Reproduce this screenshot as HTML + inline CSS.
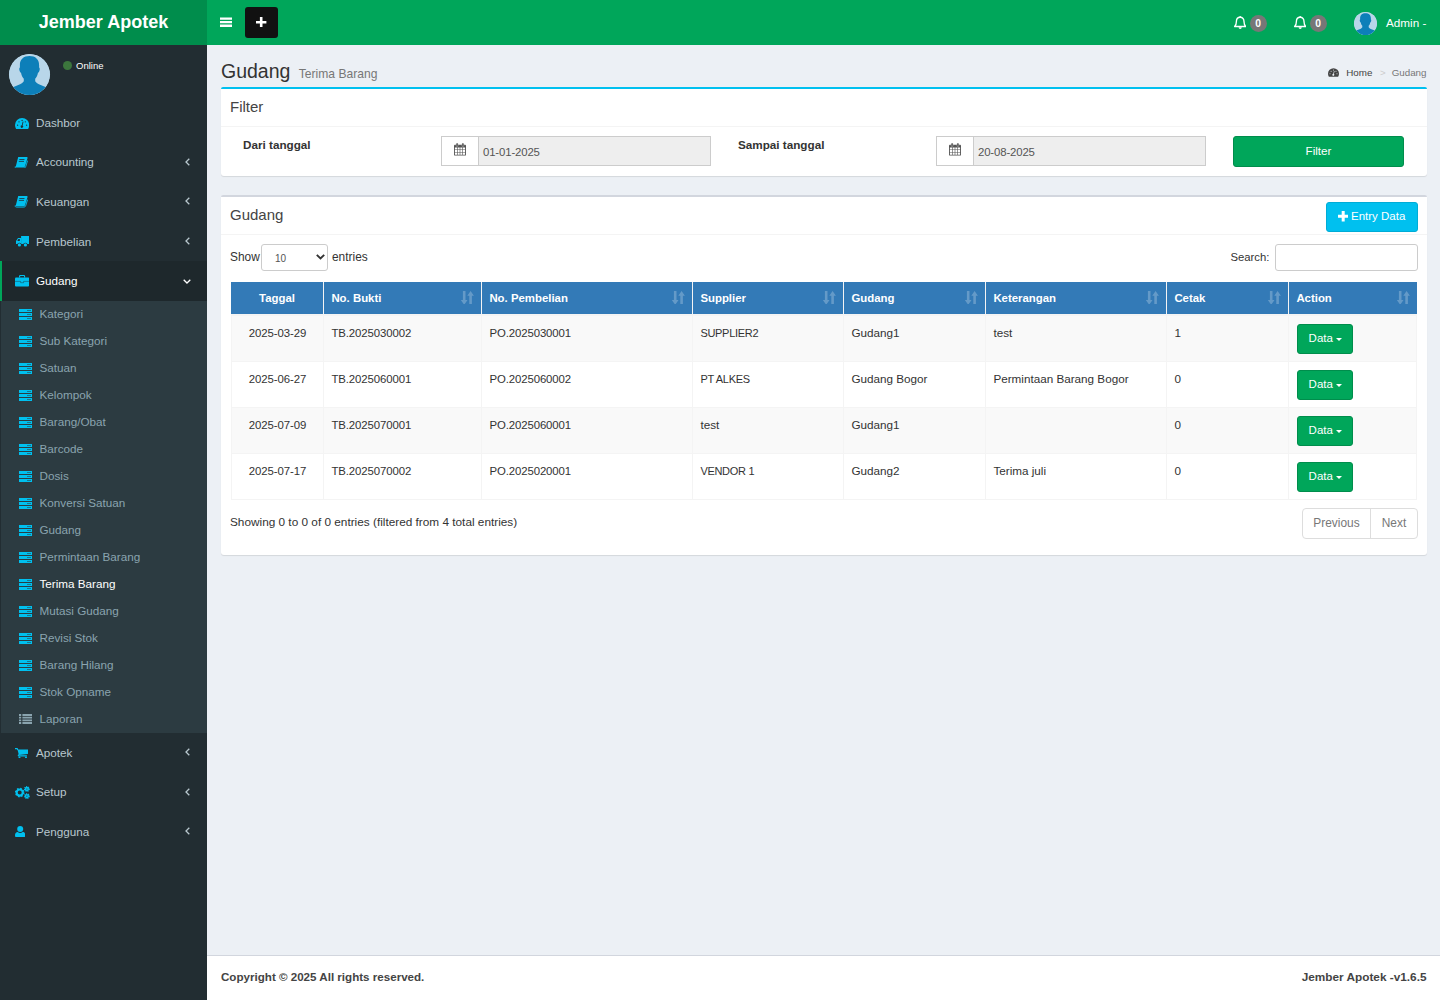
<!DOCTYPE html>
<html lang="id">
<head>
<meta charset="utf-8">
<title>Jember Apotek | Gudang - Terima Barang</title>
<style>
*{box-sizing:border-box}
html,body{margin:0;padding:0}
body{width:1440px;height:1000px;overflow:hidden;position:relative;background:#222d32;font-family:"Liberation Sans",sans-serif;font-size:11.7px;line-height:18px;color:#333}
a{text-decoration:none;color:inherit}
ul{list-style:none;margin:0;padding:0}
svg{display:block}
/* header */
.logo{position:absolute;left:0;top:0;width:207px;height:45px;background:#008d4c;color:#fff;font-weight:bold;font-size:18px;line-height:45px;text-align:center}
.navbar{position:absolute;left:207px;top:0;width:1233px;height:45px;background:#00a65a}
.toggle{position:absolute;left:13px;top:17px}
.plusbtn{position:absolute;left:38px;top:7px;width:33px;height:31px;background:#111;border-radius:3px}
.plusbtn svg{position:absolute;left:11.300px;top:9.700px}
.nav-r{position:absolute;top:0;height:45px;color:#fff}
.badge0{position:absolute;top:15px;width:17px;height:17px;border-radius:8.500px;background:#777;color:#fff;font-weight:bold;font-size:10.300px;line-height:17.500px;text-align:center}
.uimg{position:absolute;left:1147px;top:11.500px;width:23px;height:23px;border-radius:50%;overflow:hidden;background:#b9d7ea}
.uname{position:absolute;left:1179px;top:14px;font-size:11.7px;line-height:18px;color:#fff;white-space:nowrap}
/* sidebar */
.sidebar{position:absolute;left:0;top:45px;width:207px;height:955px;background:#222d32}
.avatar{position:absolute;left:9px;top:9px;width:41px;height:41px;border-radius:50%;overflow:hidden;background:#b9d7ea}
.online{position:absolute;left:63px;top:16px;font-size:9.5px;line-height:10px;color:#fff;white-space:nowrap}
.online i{display:inline-block;width:9px;height:9px;border-radius:50%;background:#3c763d;margin-right:4px;vertical-align:-1px}
.menu{position:absolute;left:0;top:58px;width:207px}
.menu>li>a{display:block;position:relative;height:39.6px;padding:10.8px 0 0 36px;color:#b8c7ce;font-size:11.7px;line-height:18px;border-left:2px solid transparent;padding-left:34px}
.menu>li.active>a{background:#1e282c;color:#fff;border-left-color:#00a65a}
.menu .ic{position:absolute;left:13px;top:14px}
.menu .arr{position:absolute;right:17px;top:15px}
.sub{background:#2c3b41;padding:1px 0 0 3.5px;height:432px;margin-left:1px}
.sub li a{display:block;position:relative;height:27px;padding:3.400px 0 0 35px;color:#8aa4af;font-size:11.7px;line-height:18px}
.sub li.active a{color:#fff}
.sub .ic{position:absolute;left:14px;top:7px}
.srv{position:absolute;left:14px;top:7px;width:13.5px;height:11px}
.srv{background:linear-gradient(#00c0ef 0,#00c0ef 3px,transparent 3px,transparent 4px,#00c0ef 4px,#00c0ef 7px,transparent 7px,transparent 8px,#00c0ef 8px,#00c0ef 11px)}
.srv:after{content:"";position:absolute;left:8.5px;top:1px;width:4px;height:1px;background:#2c3b41;box-shadow:0 4px 0 #2c3b41,0 8px 0 #2c3b41;opacity:.55}
.bell{position:absolute;top:16px}
.t{position:absolute;font-size:11.900px;line-height:18px;color:#333;white-space:nowrap}
.sel{position:absolute;left:40px;top:46px;width:67px;height:27px;border:1px solid #ccc;border-radius:3px;background:#fff}
.sel span{position:absolute;left:13px;top:5px;font-size:10px;line-height:18px;color:#555}
.sel svg{position:absolute;left:53.600px;top:9.200px}
.srch{position:absolute;left:1054px;top:46px;width:143px;height:27px;border:1px solid #ccc;border-radius:3px;background:#fff}
.pag{position:absolute;left:1081px;top:310px;width:116px;height:31px;border:1px solid #ddd;border-radius:4px;color:#777;font-size:11.900px;line-height:29px}
.pag .pv{position:absolute;left:0;top:0;width:68px;height:29px;border-right:1px solid #ddd;text-align:center}
.pag .nx{position:absolute;left:68px;top:0;width:46px;text-align:center}
.cal{position:absolute;left:11.900px;top:6px}
/* content */
.content{position:absolute;left:207px;top:45px;width:1233px;height:910px;background:#ecf0f5}
h1{position:absolute;left:14px;top:14px;margin:0;font-size:19.5px;line-height:24px;font-weight:normal;color:#333;white-space:nowrap}
h1 small{font-size:12.1px;color:#777;padding-left:3px}
.bc{position:absolute;right:13.5px;top:19.5px;font-size:9.8px;line-height:16px;color:#444;white-space:nowrap}
.bc .sep{color:#ccc;padding:0 6px 0 7.5px}
.bc .cur{color:#777}
.box{position:absolute;left:14px;width:1206px;background:#fff;border-top:3px solid #fff;border-radius:3px;box-shadow:0 1px 1px rgba(0,0,0,.1)}
.box:before{content:"";position:absolute;left:0;right:0;top:-3px;height:2px;background:#d2d6de;border-radius:3px 3px 0 0}
#b1:before{background:#00c0ef}
.box .hd{position:relative;border-bottom:1px solid #f4f4f4}
.box .title{position:absolute;left:9px;font-size:15px;line-height:18px;color:#444}
.btn{position:absolute;border-radius:3px;color:#fff;text-align:center;font-size:11.7px;white-space:nowrap}
label{position:absolute;font-weight:bold;font-size:11.7px;color:#333;white-space:nowrap}
.ig{position:absolute;height:30px;border:1px solid #ccc;background:#eee}
.ig .addon{position:absolute;left:0;top:0;width:37px;height:28px;background:#fff;border-right:1px solid #ccc}
.ig .val{position:absolute;left:41px;top:6px;font-size:11.4px;letter-spacing:-.15px;color:#555;line-height:18px}
/* table */
table{position:absolute;left:10px;top:84px;width:1186px;border-collapse:separate;border-spacing:0;table-layout:fixed}
th{background:#337ab7;color:#fff;font-weight:bold;text-align:left;height:34px;padding:0 0 1px 7.400px;border-left:1px solid #f4f4f4;border-bottom:2px solid #f4f4f4;font-size:11.4px;position:relative;white-space:nowrap}
th:first-child{text-align:center;padding:0 0 1px 0;border-left:0}
td{height:46px;vertical-align:top;padding:8px 0 0 7.400px;border-left:1px solid #f4f4f4;border-bottom:1px solid #f4f4f4;font-size:11.7px;color:#333;line-height:18px;position:relative;white-space:nowrap}
td:first-child{text-align:center;padding-left:0}
td:last-child{border-right:1px solid #f4f4f4}
td.n{font-size:11.4px;letter-spacing:-.1px}
td.u{font-size:11px;letter-spacing:-.3px}
tbody tr:nth-child(odd) td{background:#f9f9f9}
.sort{position:absolute;right:7.300px;top:8.600px;opacity:.24}
.dbtn{position:absolute;left:8px;top:8px;width:56px;height:30px;background:#00a65a;border:1px solid #008d4c;border-radius:3px;color:#fff;font-size:11.500px;line-height:27px;padding-left:10.600px}
.dbtn i{position:absolute;left:38px;top:12.500px;width:0;height:0;border-left:3.5px solid transparent;border-right:3.5px solid transparent;border-top:3.5px solid #fff}
.footer{position:absolute;left:207px;top:955px;width:1233px;height:45px;background:#fff;border-top:1px solid #d2d6de;color:#444;font-weight:bold;font-size:11.2px}
</style>
</head>
<body>
<div class="logo">Jember Apotek</div>
<div class="navbar">
  <svg class="toggle" width="12" height="11" viewBox="0 0 12 11"><path d="M0 .5h12v2.300H0zM0 4h12v2.300H0zM0 7.600h12v2.300H0z" fill="#fff"/></svg>
  <div class="plusbtn"><svg width="10.400" height="10.400" viewBox="0 0 10.400 10.400"><path d="M3.900 0h2.600v3.900h3.900v2.600H6.500v3.900H3.900V6.500H0V3.900h3.900z" fill="#fff"/></svg></div>
  <div class="bell" style="left:1027px"><svg width="12.400" height="13.400" viewBox="0 0 12.400 13.400"><path d="M6.200 1.300c-2.400 0-3.800 1.900-3.800 4.200 0 2.400-.6 3.900-1.800 5h11.200c-1.200-1.100-1.800-2.600-1.800-5 0-2.300-1.400-4.200-3.800-4.200z" fill="none" stroke="#fff" stroke-width="1.350" stroke-linejoin="round"/><path d="M6.200 0v1.300" fill="none" stroke="#fff" stroke-width="1.300"/><path d="M4.600 11.200a1.600 1.700 0 0 0 3.200 0z" fill="#fff"/></svg></div><div class="badge0" style="left:1042.500px">0</div>
  <div class="bell" style="left:1087px"><svg width="12.400" height="13.400" viewBox="0 0 12.400 13.400"><path d="M6.200 1.300c-2.400 0-3.800 1.900-3.800 4.200 0 2.400-.6 3.900-1.800 5h11.200c-1.200-1.100-1.800-2.600-1.800-5 0-2.300-1.400-4.200-3.800-4.200z" fill="none" stroke="#fff" stroke-width="1.350" stroke-linejoin="round"/><path d="M6.200 0v1.300" fill="none" stroke="#fff" stroke-width="1.300"/><path d="M4.600 11.200a1.600 1.700 0 0 0 3.200 0z" fill="#fff"/></svg></div><div class="badge0" style="left:1102.500px">0</div>
  <div class="uimg"><svg width="23" height="23" viewBox="0 0 41 41"><circle cx="20.500" cy="20.500" r="20.500" fill="#b8d6e9"/><path d="M20.500 2.100C14.500 2.100 10.900 5.500 10.900 11L10.900 13.500C10.200 13.700 10.100 15 10.500 16.600 10.800 17.900 11.300 18.600 12 18.700 12.500 21.200 13.400 23.200 14.800 24.700L14.800 27.200C13.800 29 11 30.500 7.500 31.800 4 33 1.500 34.300 0 36L0 42 41 42 41 36C39.500 34.300 37 33 33.500 31.800 30 30.500 27.200 29 26.200 27.200L26.200 24.700C27.600 23.200 28.500 21.200 29 18.700 29.700 18.600 30.200 17.900 30.500 16.600 30.900 15 30.800 13.700 30.100 13.500L30.100 11C30.100 5.500 26.500 2.100 20.500 2.100Z" fill="#0d7fb9"/></svg></div>
  <div class="uname">Admin -</div>
</div>
<div class="sidebar">
  <div class="avatar"><svg width="41" height="41" viewBox="0 0 41 41"><circle cx="20.500" cy="20.500" r="20.500" fill="#b8d6e9"/><path d="M20.500 2.100C14.500 2.100 10.900 5.500 10.900 11L10.900 13.500C10.200 13.700 10.100 15 10.500 16.600 10.800 17.900 11.300 18.600 12 18.700 12.500 21.200 13.400 23.200 14.800 24.700L14.800 27.200C13.800 29 11 30.500 7.500 31.800 4 33 1.500 34.300 0 36L0 42 41 42 41 36C39.500 34.300 37 33 33.500 31.800 30 30.500 27.200 29 26.200 27.200L26.200 24.700C27.600 23.200 28.500 21.200 29 18.700 29.700 18.600 30.200 17.900 30.500 16.600 30.900 15 30.800 13.700 30.100 13.500L30.100 11C30.100 5.500 26.500 2.100 20.500 2.100Z" fill="#0d7fb9"/></svg></div>
  <div class="online"><i></i>Online</div>
  <ul class="menu">
    <li><a><svg class="ic" style="top:14.500px;left:12.800px" width="14.200" height="11" viewBox="0 0 14.200 11"><path d="M7.1 0A7.1 7.1 0 0 0 0 7.1c0 1.4.4 2.7 1.1 3.9h12c.7-1.2 1.1-2.5 1.1-3.9A7.1 7.1 0 0 0 7.1 0z" fill="#00c0ef"/><g fill="#222d32"><circle cx="2.6" cy="7.2" r=".65"/><circle cx="4" cy="3.8" r=".65"/><circle cx="7.1" cy="2.4" r=".65"/><circle cx="10.3" cy="3.8" r=".65"/><circle cx="11.6" cy="7.2" r=".65"/><path d="M7.700 3.500l.8.200-.9 3.700a1.300 1.300 0 1 1-.8-.2z"/></g></svg>Dashbor</a></li>
    <li><a><svg class="ic" style="left:12.300px" width="13.600" height="11.800" viewBox="0 0 13.600 11.800"><path d="M4.2 0h8.4c.8 0 1.1.5.9 1.200L11 9.300c-.2.700-.6 1-1.300 1H1.600L4.200 0z" fill="#00c0ef"/><path d="M1.300 9.400c-.3.800 0 1.700 1 1.700h7.700c.8 0 1.300-.4 1.600-1.100l2-6.400" fill="none" stroke="#00c0ef" stroke-width=".9"/><path d="M5.300 2.500h5.200M4.800 4.400h5.200" stroke="#222d32" stroke-width=".8"/></svg>Accounting<svg class="arr" width="5" height="8" viewBox="0 0 5 8"><path d="M4.300.7L1 4l3.300 3.300" fill="none" stroke="#b8c7ce" stroke-width="1.300"/></svg></a></li>
    <li><a><svg class="ic" style="left:12.300px" width="13.600" height="11.800" viewBox="0 0 13.600 11.800"><path d="M4.2 0h8.4c.8 0 1.1.5.9 1.200L11 9.300c-.2.700-.6 1-1.300 1H1.600L4.200 0z" fill="#00c0ef"/><path d="M1.300 9.400c-.3.800 0 1.700 1 1.700h7.700c.8 0 1.300-.4 1.600-1.100l2-6.400" fill="none" stroke="#00c0ef" stroke-width=".9"/><path d="M5.300 2.500h5.200M4.800 4.400h5.200" stroke="#222d32" stroke-width=".8"/></svg>Keuangan<svg class="arr" width="5" height="8" viewBox="0 0 5 8"><path d="M4.300.7L1 4l3.300 3.300" fill="none" stroke="#b8c7ce" stroke-width="1.300"/></svg></a></li>
    <li><a><svg class="ic" style="top:14.700px;left:13.800px" width="13.400" height="10.600" viewBox="0 0 13.400 10.600"><path d="M5.100 0h7.700c.3 0 .6.200.6.600v7.400H5.100z" fill="#00c0ef"/><path d="M0 8V5.100l1.700-2.700c.2-.3.400-.4.700-.4h2.700v6z" fill="#00c0ef"/><path d="M1.300 4.900h2.500v-1.800H2.400z" fill="#222d32"/><circle cx="3.400" cy="8.800" r="2.150" fill="#222d32"/><circle cx="9.400" cy="8.800" r="2.150" fill="#222d32"/><circle cx="3.400" cy="8.900" r="1.600" fill="#00c0ef"/><circle cx="9.400" cy="8.900" r="1.600" fill="#00c0ef"/></svg>Pembelian<svg class="arr" width="5" height="8" viewBox="0 0 5 8"><path d="M4.300.7L1 4l3.300 3.300" fill="none" stroke="#b8c7ce" stroke-width="1.300"/></svg></a></li>
    <li class="active"><a><svg class="ic" width="14.2" height="11.4" viewBox="0 0 14.2 11.4" ><path d="M4.600 2.600V1.300c0-.5.300-.8.800-.8h3.400c.5 0 .8.300.8.800v1.300" fill="none" stroke="#00c0ef" stroke-width="1.100"/><rect x="0" y="2.400" width="14.200" height="9" rx="1" fill="#00c0ef"/><path d="M0 6.400h5.600v1.300h3V6.400h5.600" fill="none" stroke="#1e282c" stroke-width=".6" opacity=".7"/></svg>Gudang<svg class="arr" style="right:16.400px;top:17.300px" width="8" height="5" viewBox="0 0 8 5"><path d="M.7.700L4 4 7.300.700" fill="none" stroke="#fff" stroke-width="1.300"/></svg></a>
      <ul class="sub">
        <li><a><i class="srv"></i>Kategori</a></li>
        <li><a><i class="srv"></i>Sub Kategori</a></li>
        <li><a><i class="srv"></i>Satuan</a></li>
        <li><a><i class="srv"></i>Kelompok</a></li>
        <li><a><i class="srv"></i>Barang/Obat</a></li>
        <li><a><i class="srv"></i>Barcode</a></li>
        <li><a><i class="srv"></i>Dosis</a></li>
        <li><a><i class="srv"></i>Konversi Satuan</a></li>
        <li><a><i class="srv"></i>Gudang</a></li>
        <li><a><i class="srv"></i>Permintaan Barang</a></li>
        <li class="active"><a><i class="srv"></i>Terima Barang</a></li>
        <li><a><i class="srv"></i>Mutasi Gudang</a></li>
        <li><a><i class="srv"></i>Revisi Stok</a></li>
        <li><a><i class="srv"></i>Barang Hilang</a></li>
        <li><a><i class="srv"></i>Stok Opname</a></li>
        <li><a><svg class="ic" style="left:14px;top:7.400px" width="13.500" height="10" viewBox="0 0 13.500 10"><path d="M0 0h2.200v1.900H0zM0 2.700h2.200v1.900H0zM0 5.400h2.200v1.900H0zM0 8.100h2.200v1.900H0zM3.400 0h10.100v1.900H3.400zM3.400 2.700h10.100v1.900H3.400zM3.400 5.400h10.100v1.900H3.400zM3.400 8.100h10.100v1.900H3.400z" fill="#8aa4af"/></svg>Laporan</a></li>
      </ul>
    </li>
    <li><a><svg class="ic" style="top:15px" width="13.400" height="10.400" viewBox="0 0 13.400 10.400"><path d="M0 .6h2.200l.5 1.400M3.300 7.900h8.600" fill="none" stroke="#00c0ef" stroke-width="1.100"/><path d="M2.500 1.500h10.700v3.900c0 .3-.2.500-.5.600L3.900 7.100z" fill="#00c0ef"/><path d="M3.800 6.500l-.7 1.500" stroke="#00c0ef" stroke-width="1.100"/><circle cx="4.500" cy="9.400" r="1" fill="#00c0ef"/><circle cx="11" cy="9.400" r="1" fill="#00c0ef"/></svg>Apotek<svg class="arr" width="5" height="8" viewBox="0 0 5 8"><path d="M4.300.7L1 4l3.300 3.300" fill="none" stroke="#b8c7ce" stroke-width="1.300"/></svg></a></li>
    <li><a><svg class="ic" style="top:13px" width="15" height="13.200" viewBox="0 0 15 13.200"><circle cx="4.700" cy="6.600" r="3.100" fill="none" stroke="#00c0ef" stroke-width="2.200"/><circle cx="4.700" cy="6.600" r="4" fill="none" stroke="#00c0ef" stroke-width="1.600" stroke-dasharray="1.500 1.640"/><circle cx="11.900" cy="3" r="1.400" fill="none" stroke="#00c0ef" stroke-width="1.600"/><circle cx="11.900" cy="3" r="2.300" fill="none" stroke="#00c0ef" stroke-width="1.200" stroke-dasharray="1 .806"/><circle cx="11.900" cy="10.100" r="1.400" fill="none" stroke="#00c0ef" stroke-width="1.600"/><circle cx="11.900" cy="10.100" r="2.300" fill="none" stroke="#00c0ef" stroke-width="1.200" stroke-dasharray="1 .806"/></svg>Setup<svg class="arr" width="5" height="8" viewBox="0 0 5 8"><path d="M4.300.7L1 4l3.300 3.300" fill="none" stroke="#b8c7ce" stroke-width="1.300"/></svg></a></li>
    <li><a><svg class="ic" style="top:13.500px" width="10.400" height="11.300" viewBox="0 0 10.400 11.300"><circle cx="5.200" cy="3" r="3" fill="#00c0ef"/><path d="M0 9.700C0 7.200 1 6 2.800 6c.6.600 1.400 1 2.400 1s1.800-.4 2.400-1c1.800 0 2.800 1.200 2.800 3.700 0 1-.7 1.600-1.600 1.600H1.600C.7 11.300 0 10.700 0 9.700z" fill="#00c0ef"/></svg>Pengguna<svg class="arr" width="5" height="8" viewBox="0 0 5 8"><path d="M4.300.7L1 4l3.300 3.300" fill="none" stroke="#b8c7ce" stroke-width="1.300"/></svg></a></li>
  </ul>
</div>
<div class="content">
  <h1>Gudang <small>Terima Barang</small></h1>
  <div class="bc"><svg style="position:absolute;left:-18px;top:3px" width="11" height="9" viewBox="0 0 14.200 11"><path d="M7.100 0A7.100 7.100 0 0 0 0 7.100c0 1.400.4 2.700 1.100 3.900h12c.7-1.200 1.100-2.500 1.100-3.900A7.100 7.100 0 0 0 7.100 0z" fill="#444"/><g fill="#ecf0f5"><circle cx="2.600" cy="7.200" r=".65"/><circle cx="4" cy="3.800" r=".65"/><circle cx="7.100" cy="2.400" r=".65"/><circle cx="10.300" cy="3.800" r=".65"/><circle cx="11.600" cy="7.200" r=".65"/><path d="M7.700 3.500l.8.200-.9 3.700a1.300 1.300 0 1 1-.8-.2z"/></g></svg>Home<span class="sep">&gt;</span><span class="cur">Gudang</span></div>
  <div class="box" id="b1" style="top:42px;height:89px">
    <div class="hd" style="height:37px"><span class="title" style="top:8px">Filter</span></div>
    <label style="left:22px;top:45.5px">Dari tanggal</label>
    <div class="ig" style="left:220px;top:46px;width:270px"><span class="addon"><svg class="cal" width="12" height="12.600" viewBox="0 0 12 12.600"><path d="M0 2.500C0 2 .4 1.700.9 1.700h10.200c.5 0 .9.300.9.800v9.200c0 .5-.4.900-.9.900H.9c-.5 0-.9-.4-.9-.9z" fill="#555"/><path d="M.9 4.600h2.200v1.900H.9zM3.700 4.600h2v1.900h-2zM6.300 4.600h2v1.900h-2zM8.900 4.600h2.200v1.900H8.900zM.9 7.100h2.200v1.900H.9zM3.700 7.100h2v1.900h-2zM6.300 7.100h2v1.900h-2zM8.900 7.100h2.200v1.900H8.900zM.9 9.600h2.200v2.100H.9zM3.700 9.600h2v2.100h-2zM6.300 9.600h2v2.100h-2zM8.900 9.600h2.200v2.100H8.900z" fill="#fff"/><rect x="2.100" y="0" width="2" height="3.500" rx="1" fill="#555" stroke="#fff" stroke-width=".3"/><rect x="7.900" y="0" width="2" height="3.500" rx="1" fill="#555" stroke="#fff" stroke-width=".3"/></svg></span><span class="val">01-01-2025</span></div>
    <label style="left:517px;top:45.5px">Sampai tanggal</label>
    <div class="ig" style="left:715px;top:46px;width:270px"><span class="addon"><svg class="cal" width="12" height="12.600" viewBox="0 0 12 12.600"><path d="M0 2.500C0 2 .4 1.700.9 1.700h10.200c.5 0 .9.300.9.800v9.200c0 .5-.4.900-.9.900H.9c-.5 0-.9-.4-.9-.9z" fill="#555"/><path d="M.9 4.600h2.200v1.900H.9zM3.700 4.600h2v1.900h-2zM6.300 4.600h2v1.900h-2zM8.900 4.600h2.200v1.900H8.900zM.9 7.100h2.200v1.900H.9zM3.700 7.100h2v1.900h-2zM6.300 7.100h2v1.900h-2zM8.900 7.100h2.200v1.900H8.900zM.9 9.600h2.200v2.100H.9zM3.700 9.600h2v2.100h-2zM6.300 9.600h2v2.100h-2zM8.900 9.600h2.200v2.100H8.900z" fill="#fff"/><rect x="2.100" y="0" width="2" height="3.500" rx="1" fill="#555" stroke="#fff" stroke-width=".3"/><rect x="7.900" y="0" width="2" height="3.500" rx="1" fill="#555" stroke="#fff" stroke-width=".3"/></svg></span><span class="val">20-08-2025</span></div>
    <div class="btn" style="left:1012px;top:46px;width:171px;height:31px;line-height:28px;background:#00a65a;border:1px solid #008d4c">Filter</div>
  </div>
  <div class="box" id="b2" style="top:150px;height:359.5px">
    <div class="hd" style="height:37px"><span class="title" style="top:8px">Gudang</span>
      <div class="btn" style="left:1105px;top:4px;width:92px;height:30px;line-height:26px;background:#00c0ef;border:1px solid #00acd6"><svg style="position:absolute;left:11px;top:8.300px" width="10.400" height="10.400" viewBox="0 0 10.400 10.400"><path d="M3.700 0h3v3.700h3.700v3H6.700v3.700h-3V6.700H0v-3h3.700z" fill="#fff"/></svg><span style="position:absolute;left:24px;top:0;font-size:11.500px">Entry Data</span></div>
    </div>
    <span class="t" style="left:9px;top:50px">Show</span>
    <div class="sel"><span>10</span><svg width="9" height="6" viewBox="0 0 9 6"><path d="M.8.800l3.700 3.700L8.200.800" fill="none" stroke="#333" stroke-width="1.900"/></svg></div>
    <span class="t" style="left:111px;top:50px">entries</span>
    <span class="t" style="left:1009.500px;top:50px;font-size:11.300px">Search:</span>
    <div class="srch"></div>
    <span class="t" style="left:9px;top:315px;font-size:11.800px">Showing 0 to 0 of 0 entries (filtered from 4 total entries)</span>
    <div class="pag"><span class="pv">Previous</span><span class="nx">Next</span></div>
    <table>
      <colgroup><col style="width:92px"><col style="width:158px"><col style="width:211px"><col style="width:151px"><col style="width:142px"><col style="width:181px"><col style="width:122px"><col style="width:129px"></colgroup>
      <thead><tr><th>Taggal</th><th>No. Bukti<svg class="sort" width="12.800" height="13.800" viewBox="0 0 12.800 13.800"><path d="M1.900 0h2.600v9h2L3.200 13.800-.1 9h2zM8.300 13.800h2.600V4.800h2L9.600 0 6.300 4.800h2z" fill="#fff"/></svg></th><th>No. Pembelian<svg class="sort" width="12.800" height="13.800" viewBox="0 0 12.800 13.800"><path d="M1.900 0h2.600v9h2L3.200 13.800-.1 9h2zM8.300 13.800h2.600V4.800h2L9.600 0 6.300 4.800h2z" fill="#fff"/></svg></th><th>Supplier<svg class="sort" width="12.800" height="13.800" viewBox="0 0 12.800 13.800"><path d="M1.900 0h2.600v9h2L3.200 13.800-.1 9h2zM8.300 13.800h2.600V4.800h2L9.600 0 6.300 4.800h2z" fill="#fff"/></svg></th><th>Gudang<svg class="sort" width="12.800" height="13.800" viewBox="0 0 12.800 13.800"><path d="M1.900 0h2.600v9h2L3.200 13.800-.1 9h2zM8.300 13.800h2.600V4.800h2L9.600 0 6.300 4.800h2z" fill="#fff"/></svg></th><th>Keterangan<svg class="sort" width="12.800" height="13.800" viewBox="0 0 12.800 13.800"><path d="M1.900 0h2.600v9h2L3.200 13.800-.1 9h2zM8.300 13.800h2.600V4.800h2L9.600 0 6.300 4.800h2z" fill="#fff"/></svg></th><th>Cetak<svg class="sort" width="12.800" height="13.800" viewBox="0 0 12.800 13.800"><path d="M1.900 0h2.600v9h2L3.200 13.800-.1 9h2zM8.300 13.800h2.600V4.800h2L9.600 0 6.300 4.800h2z" fill="#fff"/></svg></th><th>Action<svg class="sort" width="12.800" height="13.800" viewBox="0 0 12.800 13.800"><path d="M1.900 0h2.600v9h2L3.200 13.800-.1 9h2zM8.300 13.800h2.600V4.800h2L9.600 0 6.300 4.800h2z" fill="#fff"/></svg></th></tr></thead>
      <tbody>
        <tr><td class="n">2025-03-29</td><td class="n">TB.2025030002</td><td class="n">PO.2025030001</td><td class="u">SUPPLIER2</td><td>Gudang1</td><td>test</td><td>1</td><td><span class="dbtn">Data<i></i></span></td></tr>
        <tr><td class="n">2025-06-27</td><td class="n">TB.2025060001</td><td class="n">PO.2025060002</td><td class="u">PT ALKES</td><td>Gudang Bogor</td><td>Permintaan Barang Bogor</td><td>0</td><td><span class="dbtn">Data<i></i></span></td></tr>
        <tr><td class="n">2025-07-09</td><td class="n">TB.2025070001</td><td class="n">PO.2025060001</td><td>test</td><td>Gudang1</td><td></td><td>0</td><td><span class="dbtn">Data<i></i></span></td></tr>
        <tr><td class="n">2025-07-17</td><td class="n">TB.2025070002</td><td class="n">PO.2025020001</td><td class="u">VENDOR 1</td><td>Gudang2</td><td>Terima juli</td><td>0</td><td><span class="dbtn">Data<i></i></span></td></tr>
      </tbody>
    </table>
  </div>
</div>
<div class="footer">
  <span style="position:absolute;left:14px;top:12px;font-size:11.600px">Copyright © 2025 All rights reserved.</span>
  <span style="position:absolute;right:13.500px;top:12px;font-size:11.800px">Jember Apotek -v1.6.5</span>
</div>
</body>
</html>
